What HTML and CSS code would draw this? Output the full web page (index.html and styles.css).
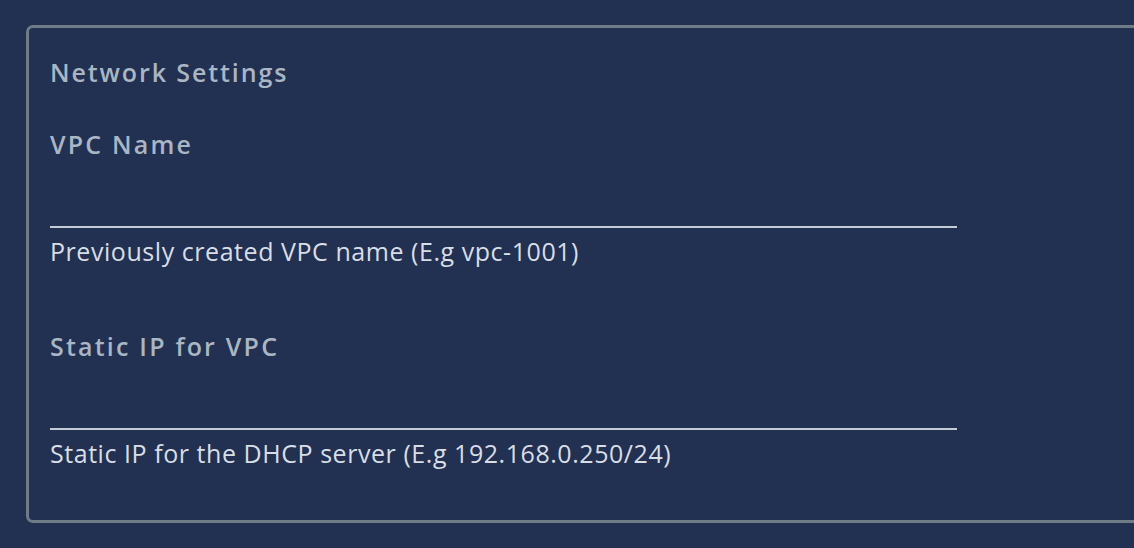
FILE: index.html
```html
<!DOCTYPE html>
<html>
<head>
<meta charset="utf-8">
<link rel="stylesheet" href="styles.css">
</head>
<body>
<section class="card">
  <h2 class="title">Network Settings</h2>
  <div class="field">
    <label class="label">VPC Name</label>
    <div class="input"></div>
    <div class="helper">Previously created VPC name (E.g vpc-1001)</div>
  </div>
  <div class="field">
    <label class="label">Static IP for VPC</label>
    <div class="input"></div>
    <div class="helper">Static IP for the DHCP server (E.g 192.168.0.250/24)</div>
  </div>
</section>
</body>
</html>
```
FILE: styles.css
```css
html, body {
  margin: 0;
  padding: 0;
  background: #223052;
  height: 100%;
  overflow: hidden;
}
body {
  font-family: "Open Sans", "Noto Sans", sans-serif;
  padding: 25px 0 0 26px;
}
.card {
  border: 3px solid #6e7c87;
  border-right: none;
  border-radius: 7px 0 0 7px;
  padding: 28px 0 52px 21px;
  width: calc(100% + 40px);
  box-sizing: border-box;
}
.title {
  margin: 0;
  font-size: 25px;
  font-weight: 600;
  line-height: 32px;
  letter-spacing: 1.9px;
  color: #a9b6c3;
}
.field {
  margin-top: 40px;
  width: 907px;
}
.field + .field {
  margin-top: 64px;
}
.label {
  display: block;
  font-size: 25px;
  font-weight: 600;
  line-height: 32px;
  letter-spacing: 2.2px;
  color: #a9b6c3;
}
.input {
  height: 66px;
  border-bottom: 2px solid #c3ccd5;
}
.helper {
  margin-top: 8px;
  font-size: 25px;
  line-height: 30px;
  letter-spacing: 0.55px;
  color: #d7dee5;
}
```
